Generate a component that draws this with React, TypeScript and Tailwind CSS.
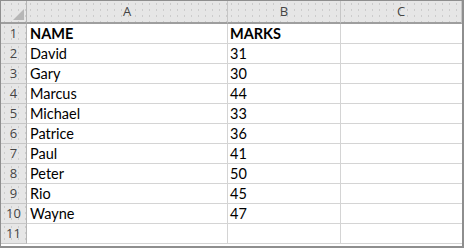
import React from "react";

const rows: [string, string][] = [
  ["NAME", "MARKS"],
  ["David", "31"],
  ["Gary", "30"],
  ["Marcus", "44"],
  ["Michael", "33"],
  ["Patrice", "36"],
  ["Paul", "41"],
  ["Peter", "50"],
  ["Rio", "45"],
  ["Wayne", "47"],
  ["", ""],
];

const dots =
  "bg-[#e6e6e6] bg-[image:radial-gradient(#cccccc_0.6px,transparent_0.9px)] bg-[size:7px_6px]";

export default function App() {
  return (
    <div className="w-[464px] h-[248px] bg-white overflow-hidden border border-[#8e8e8e] border-r-2 border-b-2 box-border">
      <div
        className="grid grid-cols-[26px_201px_113px_1fr] text-[#000]"
        style={{ fontFamily: "Lato, 'Open Sans', sans-serif" }}
      >
        <div className={`h-[23px] relative border-r border-b-2 border-r-[#b5b5b5] border-b-[#9e9e9e] ${dots}`}>
          <div className="absolute right-[2px] bottom-[2px] w-0 h-0 border-l-[11px] border-l-transparent border-b-[11px] border-b-[#b7b7b7]" />
        </div>
        {["A", "B", "C"].map((c) => (
          <div
            key={c}
            className={`h-[23px] flex items-center justify-center text-[13px] text-[#444] border-r border-b-2 border-r-[#c6c6c6] border-b-[#9e9e9e] ${dots}`}
            style={{ fontFamily: "'Open Sans', 'Noto Sans', sans-serif" }}
          >
            {c}
          </div>
        ))}
        {rows.map((r, i) => (
          <React.Fragment key={i}>
            <div
              className={`h-[20px] flex items-center justify-center text-[13px] text-[#444] border-r border-b border-r-[#b5b5b5] border-b-[#c6c6c6] ${dots}`}
              style={{ fontFamily: "'Open Sans', 'Noto Sans', sans-serif" }}
            >
              {i + 1}
            </div>
            <div
              className={`h-[20px] flex items-center pl-[3px] text-[14.5px] border-r border-b border-[#d4d4d4] ${i === 0 ? "font-bold" : ""}`}
            >
              {r[0]}
            </div>
            <div
              className={`h-[20px] flex items-center pl-[2px] text-[14.5px] border-r border-b border-[#d4d4d4] ${i === 0 ? "font-bold" : ""}`}
            >
              {r[1]}
            </div>
            <div className="h-[20px] border-b border-[#d4d4d4]" />
          </React.Fragment>
        ))}
      </div>
    </div>
  );
}
